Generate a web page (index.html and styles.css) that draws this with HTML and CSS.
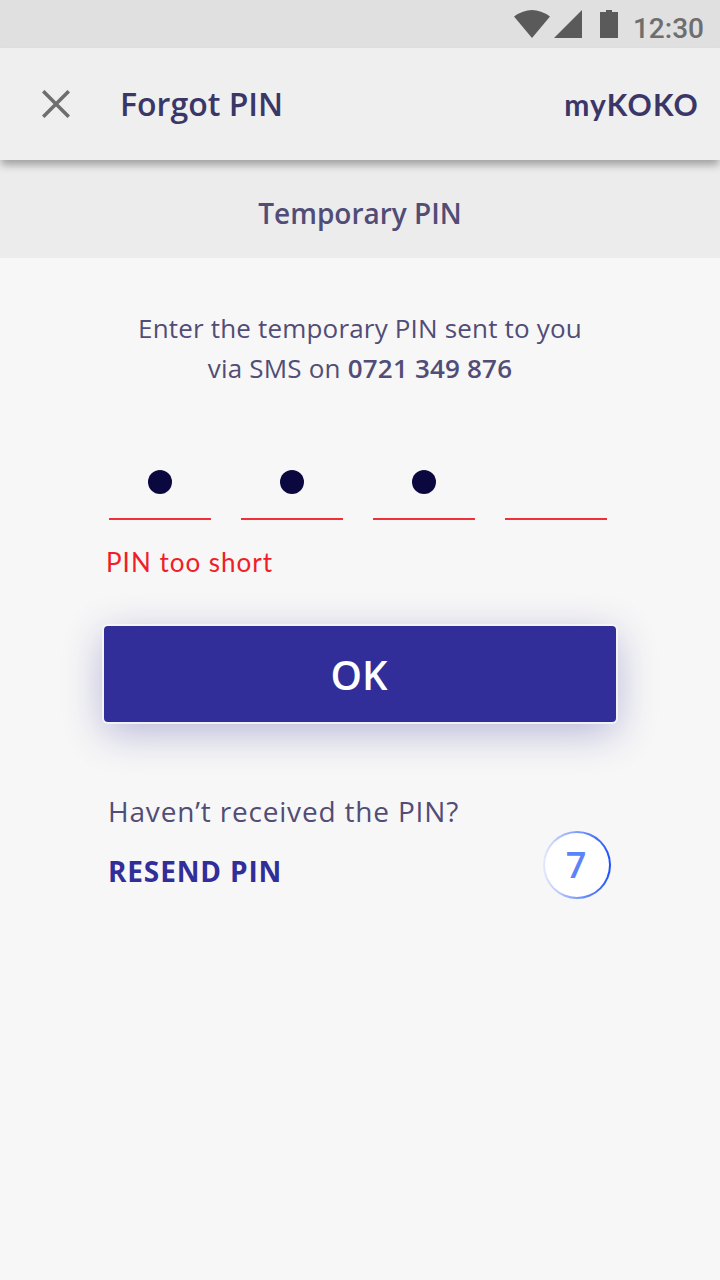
FILE: index.html
```
<!DOCTYPE html>
<html lang="en">
<head>
<meta charset="utf-8">
<title>Forgot PIN</title>
<link rel="stylesheet" href="styles.css">
</head>
<body>
<div class="status-bar">
  <svg class="status-icons" width="106" height="28" viewBox="0 0 106 28">
    <path d="M0 6.5Q18-6.5 36 6.5L18 28Z"/>
    <path d="M40 28L68 0V28Z"/>
    <path d="M86 2H92V0H98V2H104V28H86Z"/>
  </svg>
  <span class="clock">12:30</span>
</div>
<header class="app-bar">
  <svg class="close" width="28" height="28" viewBox="0 0 28 28"><path d="M1.2 1.2L26.8 26.8M26.8 1.2L1.2 26.8"/></svg>
  <h1 class="title">Forgot PIN</h1>
  <span class="brand">myKOKO</span>
</header>
<h2 class="section-title">Temporary PIN</h2>
<main class="content">
  <p class="intro">Enter the temporary PIN sent to you<br><span class="sms">via SMS on <strong class="phone">0721 349 876</strong></span></p>
  <div class="pin">
    <div class="digit"><span class="dot"></span></div>
    <div class="digit"><span class="dot"></span></div>
    <div class="digit"><span class="dot"></span></div>
    <div class="digit"></div>
  </div>
  <p class="error">PIN too short</p>
  <button class="ok">OK</button>
  <div class="resend">
    <div class="resend-text">
      <p class="question">Haven’t received the PIN?</p>
      <a class="resend-link">RESEND PIN</a>
    </div>
    <div class="timer"><span class="timer-value">7</span></div>
  </div>
</main>
</body>
</html>
```
FILE: styles.css
```
* { box-sizing: border-box; }
body {
  margin: 0;
  min-height: 1280px;
  background: #f7f7f7;
  font-family: "Open Sans", "Noto Sans", sans-serif;
  color: #514d76;
}
h1, h2, p { margin: 0; }
.status-bar {
  height: 48px;
  display: flex;
  justify-content: flex-end;
  align-items: center;
  gap: 13px;
  padding-right: 16px;
  background: #e0e0e0;
}
.status-icons { fill: #5a5a5a; }
.clock {
  font: 500 28px/34px Roboto, sans-serif;
  color: #6e6e6e;
  padding-top: 10px;
}
.app-bar {
  position: relative;
  height: 112px;
  display: flex;
  align-items: center;
  padding: 0 21px 0 42px;
  background: #efefef;
  box-shadow: 0 6px 8px -1px rgba(0, 0, 0, .32);
}
.close { stroke: #6e6e6e; stroke-width: 3.6; fill: none; }
.title {
  margin-left: 50px;
  font-size: 32px;
  line-height: 44px;
  font-weight: 600;
  color: #3a3768;
}
.brand {
  margin-left: auto;
  font: 700 30px/36px Lato, sans-serif;
  letter-spacing: 1.2px;
  color: #3a3768;
}
.section-title {
  height: 98px;
  padding-top: 8px;
  background: #ececec;
  font-size: 28px;
  line-height: 90px;
  font-weight: 600;
  text-align: center;
}
.content { padding: 50px 104px 0; }
.intro { font-size: 26px; line-height: 40px; letter-spacing: .18px; text-align: center; white-space: nowrap; }
.sms { letter-spacing: .2px; }
.phone { font-weight: 600; }
.pin { display: flex; gap: 30px; margin: 82px 0 0 5px; }
.digit {
  width: 102px;
  height: 50px;
  display: flex;
  justify-content: center;
  border-bottom: 2px solid #ef3039;
}
.dot { width: 24px; height: 24px; border-radius: 50%; background: #0b0840; }
.error {
  margin: 24px 0 0 2px;
  font: 400 26px/36px Lato, sans-serif;
  letter-spacing: 1px;
  color: #f11d28;
}
.ok {
  display: block;
  width: 512px;
  height: 96px;
  margin-top: 46px;
  padding: 2px 2px 0 0;
  border: 0;
  border-radius: 4px;
  background: #312e99;
  color: #fff;
  font: 600 40px/94px "Open Sans", sans-serif;
  box-shadow: 0 0 0 2px rgba(248, 248, 248, .82), 0 10px 40px rgba(49, 46, 153, .33);
}
.resend { display: flex; justify-content: space-between; padding: 69px 5px 0 4px; }
.resend-text { display: flex; flex-direction: column; gap: 20px; }
.question { font-size: 28px; line-height: 40px; letter-spacing: .82px; }
.resend-link { font-size: 28px; line-height: 40px; font-weight: 700; letter-spacing: .85px; color: #312e99; }
.timer {
  width: 68px;
  height: 68px;
  margin-top: 40px;
  padding-right: 2px;
  border: 2px solid transparent;
  border-radius: 50%;
  background: linear-gradient(#fff, #fff) padding-box, linear-gradient(90deg, #e4e9fd, #1a50fa) border-box;
  display: flex;
  align-items: center;
  justify-content: center;
}
.timer-value { font-size: 36px; line-height: 48px; font-weight: 600; color: #5c83f8; }
```
